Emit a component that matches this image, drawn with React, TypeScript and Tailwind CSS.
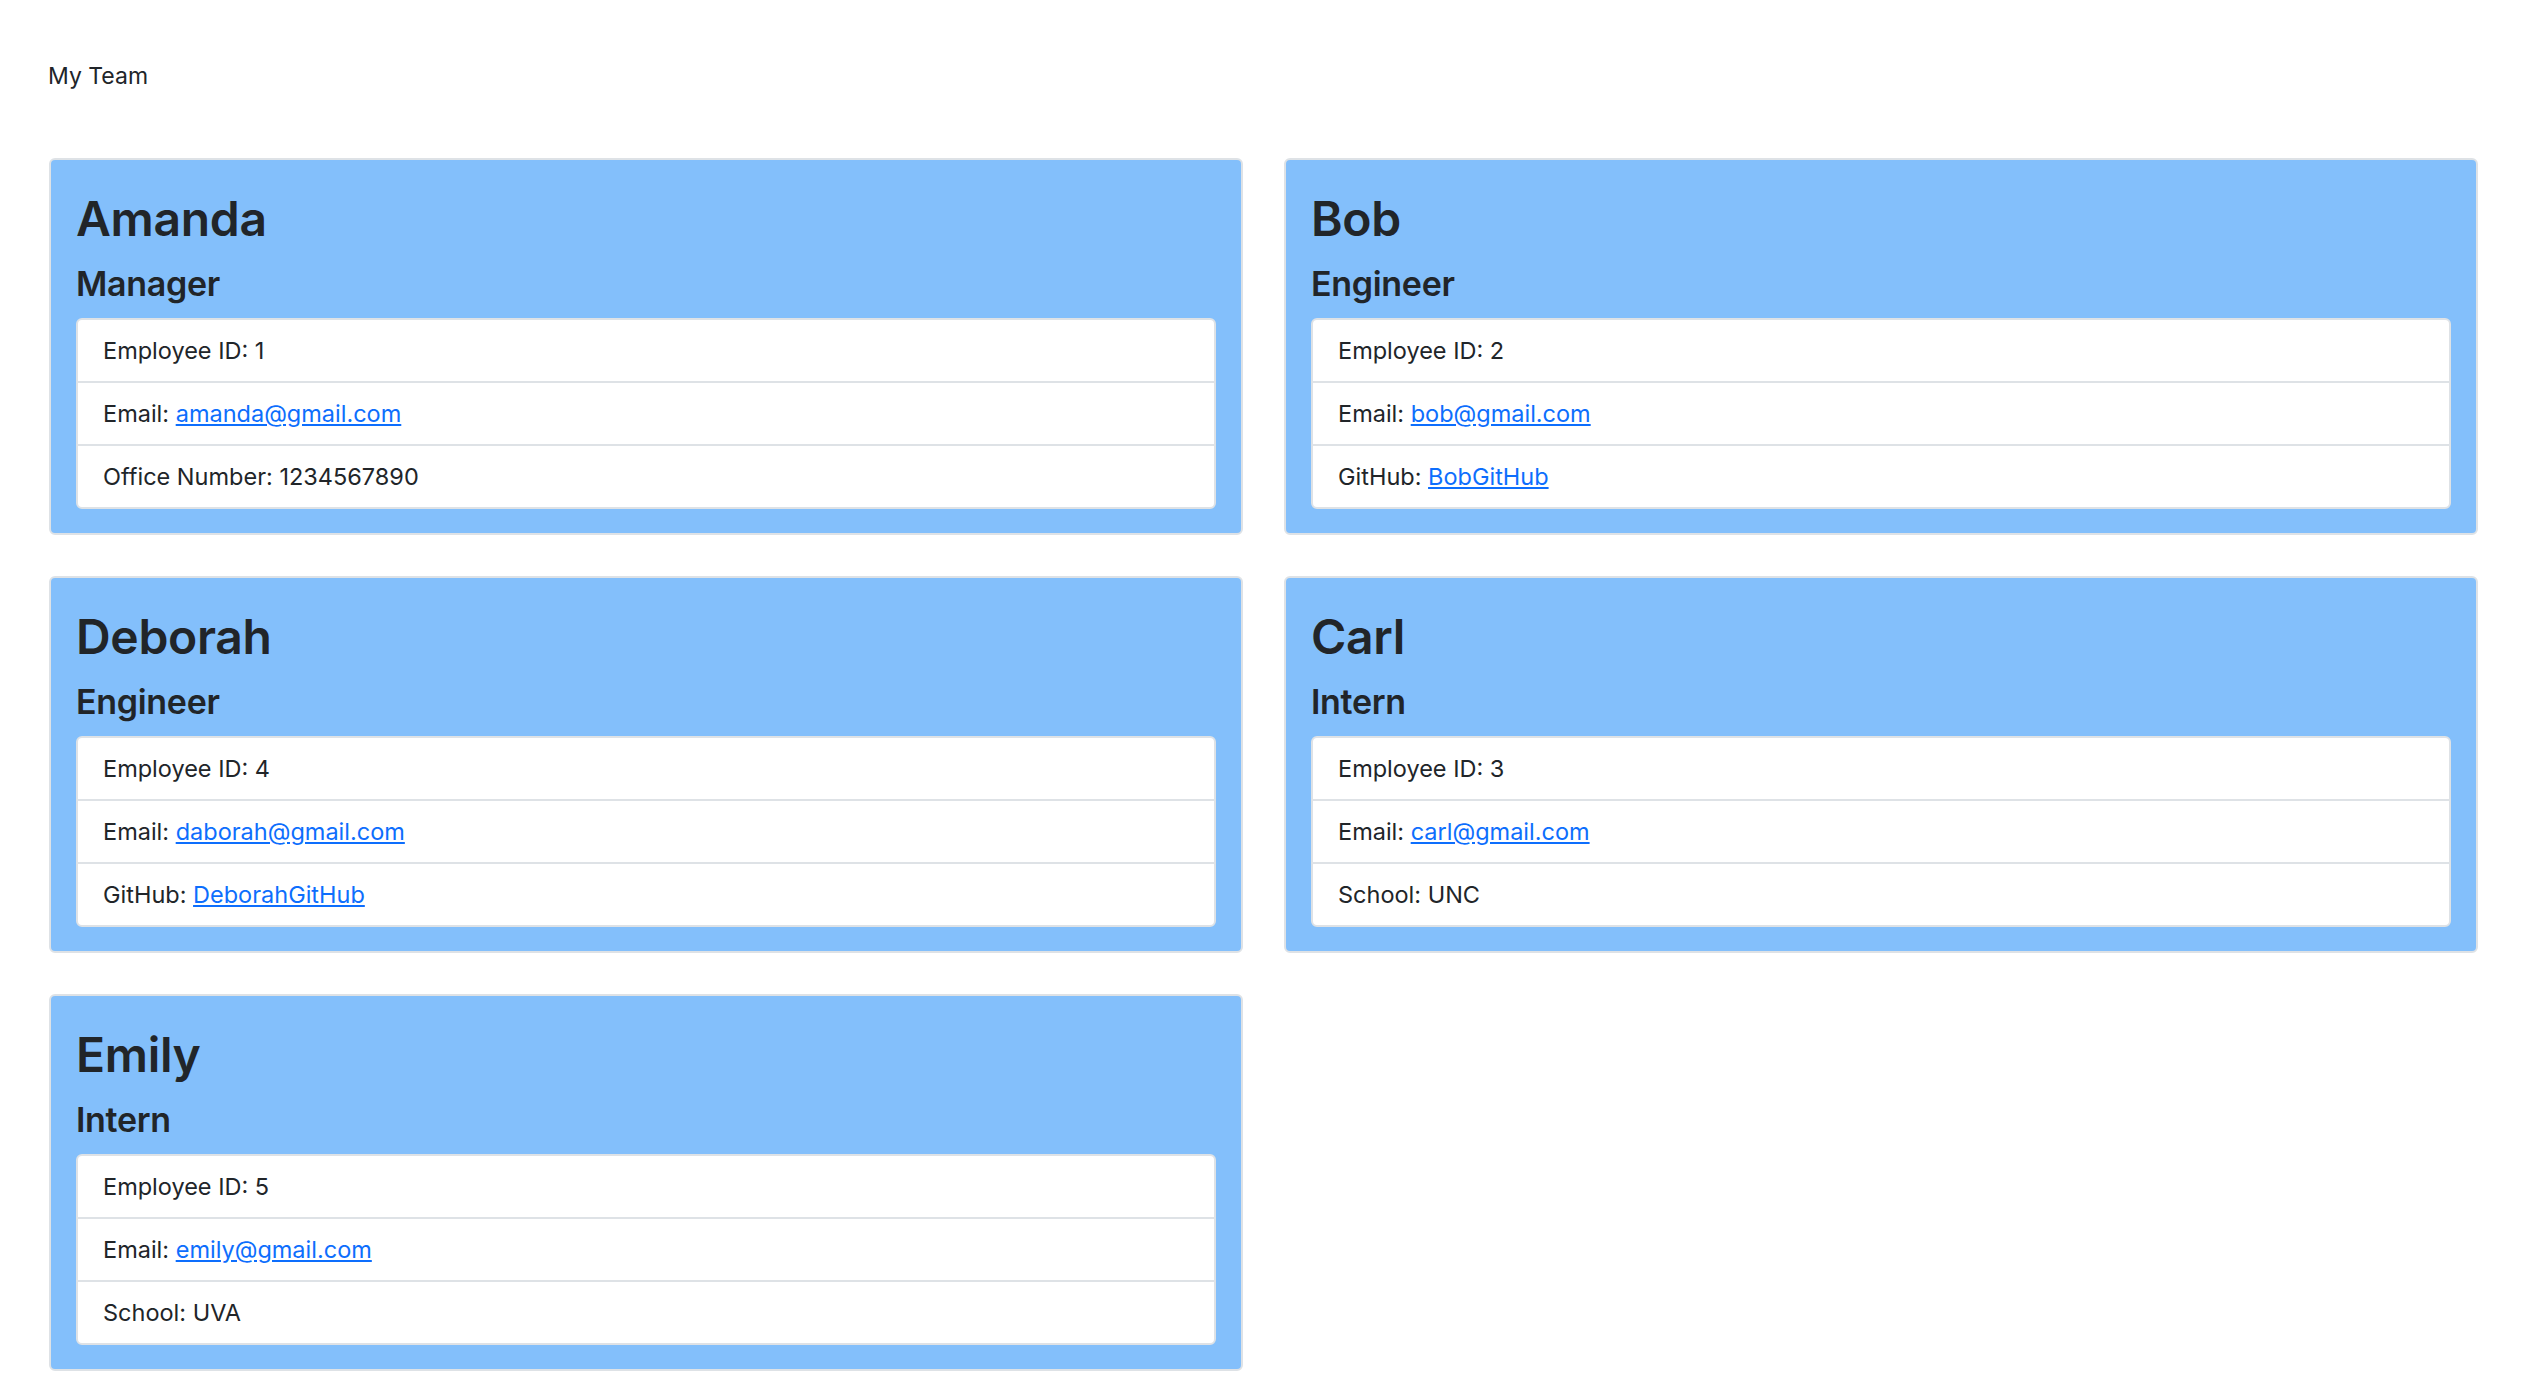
import React from "react";

type Row = { label: string; value: string; link?: boolean };
type Member = { name: string; role: string; rows: Row[] };

const members: Member[] = [
  {
    name: "Amanda",
    role: "Manager",
    rows: [
      { label: "Employee ID", value: "1" },
      { label: "Email", value: "amanda@gmail.com", link: true },
      { label: "Office Number", value: "1234567890" },
    ],
  },
  {
    name: "Bob",
    role: "Engineer",
    rows: [
      { label: "Employee ID", value: "2" },
      { label: "Email", value: "bob@gmail.com", link: true },
      { label: "GitHub", value: "BobGitHub", link: true },
    ],
  },
  {
    name: "Deborah",
    role: "Engineer",
    rows: [
      { label: "Employee ID", value: "4" },
      { label: "Email", value: "daborah@gmail.com", link: true },
      { label: "GitHub", value: "DeborahGitHub", link: true },
    ],
  },
  {
    name: "Carl",
    role: "Intern",
    rows: [
      { label: "Employee ID", value: "3" },
      { label: "Email", value: "carl@gmail.com", link: true },
      { label: "School", value: "UNC" },
    ],
  },
  {
    name: "Emily",
    role: "Intern",
    rows: [
      { label: "Employee ID", value: "5" },
      { label: "Email", value: "emily@gmail.com", link: true },
      { label: "School", value: "UVA" },
    ],
  },
];

function Card({ m }: { m: Member }) {
  return (
    <div className="rounded-[6px] border-2 border-[#dee2e6] bg-[#83bffb] px-[25px] pt-[28px] pb-[24px]">
      <h2 className="m-0 text-[48px] leading-[61px] font-semibold tracking-[-0.3px] text-[#212529]">{m.name}</h2>
      <h4 className="mt-[12px] mb-[11px] text-[34px] leading-[46px] font-semibold tracking-[-0.3px] text-[#212529]">{m.role}</h4>
      <ul className="rounded-[6px] border-2 border-[#dee2e6] bg-white">
        {m.rows.map((r, i) => (
          <li
            key={i}
            className={
              "px-[25px] pt-[13px] text-[23.5px] leading-[36px] text-[#212529] " +
              (i > 0 ? "h-[63px] border-t-2 border-[#dee2e6]" : "h-[61px]")
            }
          >
            {r.label}:{" "}
            {r.link ? (
              <a href="#" className="text-[#0d6efd] underline">
                {r.value}
              </a>
            ) : (
              r.value
            )}
          </li>
        ))}
      </ul>
    </div>
  );
}

export default function App() {
  return (
    <div className="min-h-screen bg-white" style={{ fontFamily: "Inter, 'Noto Sans', sans-serif" }}>
      <header className="pt-[58px] pl-[48px] text-[23px] leading-[36px] text-[#212529]">My Team</header>
      <main className="mt-[64px] pl-[49px] pr-[46px] grid grid-cols-2 gap-x-[41px] gap-y-[41px]">
        {members.map((m) => (
          <Card key={m.name} m={m} />
        ))}
      </main>
    </div>
  );
}
